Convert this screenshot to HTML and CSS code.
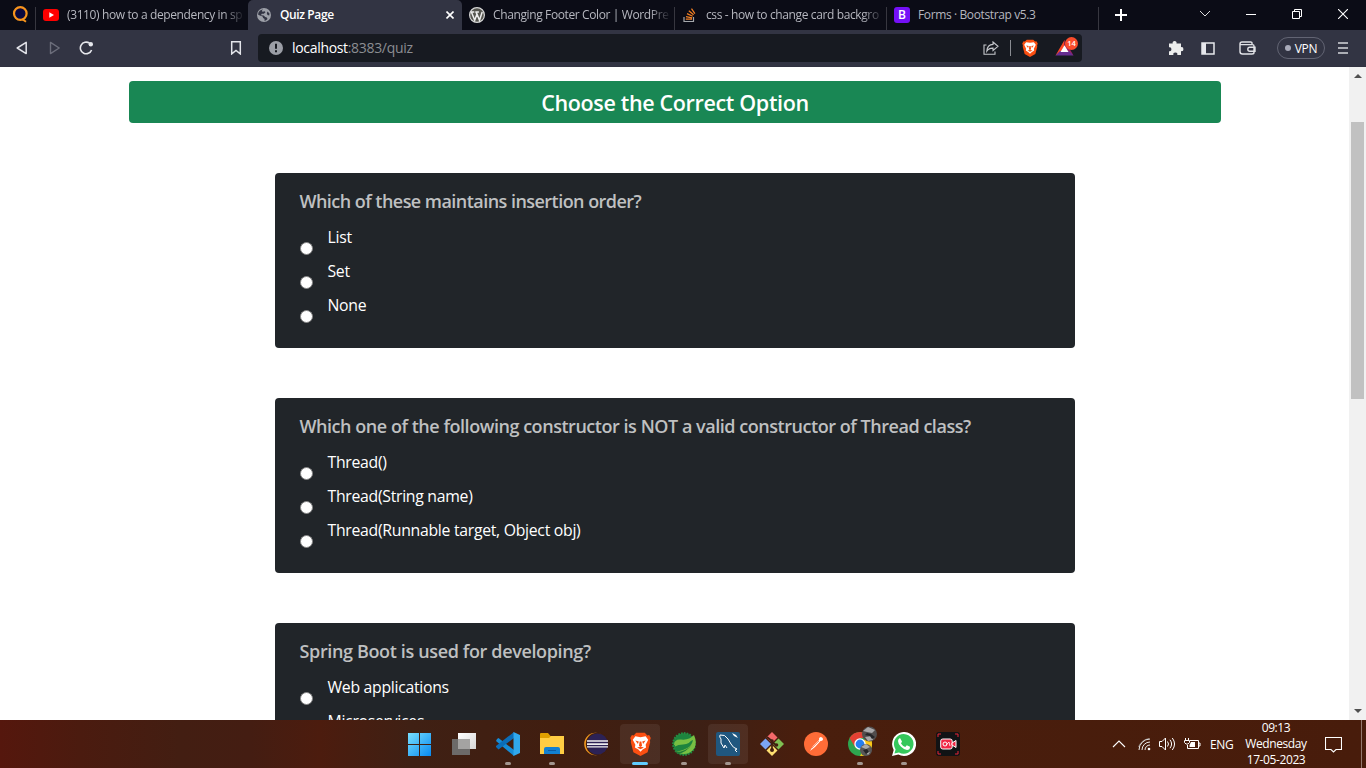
FILE: index.html
```html
<!DOCTYPE html>
<html lang="en">
<head>
<meta charset="utf-8">
<title>Quiz Page</title>
<link rel="stylesheet" href="styles.css">
</head>
<body>
<div class="screen">
  <header class="tabs">
    <div class="tab pinned">
      <svg width="18" height="18" viewBox="0 0 18 18"><circle cx="8.3" cy="7.5" r="6.3" fill="#08083f" stroke="#f7941d" stroke-width="2.2"/><path d="M10 13l4 2.8" stroke="#f7941d" stroke-width="2"/></svg>
    </div>
    <div class="tab tab-youtube">
      <svg width="16" height="12" viewBox="0 0 16 12"><rect width="16" height="12" rx="3" fill="#f00"/><path d="M6.3 3.3v5.4L11 6z" fill="#fff"/></svg>
      <span class="tab-title t-youtube">(3110) how to a dependency in sp</span>
    </div>
    <div class="tab active">
      <svg width="14" height="14" viewBox="0 0 14 14"><circle cx="7" cy="7" r="7" fill="#9da0a8"/><path d="M6 1.300L4.700 3l1 .7 2-.5.8 1-1.700 1.600H4.700L4 7.300l2.700.2 1.500 1.600 1.600.3.700 1.500-1.700 1.700-1.400.2.200-1.900-1.500-.8-.5-1.700L2.300 7.300 1 6.500A6 6 0 0 1 3 2.500zM10.500 3.500l2 2-.3 2-1.700-.6-.7-1.600z" fill="#323443"/></svg>
      <span class="tab-title t-quiz">Quiz Page</span>
      <svg class="tab-close" width="8" height="8" viewBox="0 0 8 8"><path d="M.5.5l7 7m0-7l-7 7" stroke="#fff" stroke-width="1.6"/></svg>
    </div>
    <div class="tab tab-wp">
      <svg width="16" height="16" viewBox="0 0 16 16"><circle cx="8" cy="8" r="7.4" fill="#55554f" stroke="#d5d5d5" stroke-width="1.2"/><path d="M2.4 5l3.3 8.2L8 7l2.5 6.2L13.2 5M1.8 5h3.5M6.3 5h3.6M7 5l1 2.5" fill="none" stroke="#eee" stroke-width="1.5"/></svg>
      <span class="tab-title t-wp">Changing Footer Color | WordPre</span>
    </div>
    <div class="tab tab-so">
      <svg width="14" height="16" viewBox="0 0 14 16"><path d="M1 10v4.5h9.5V10" fill="none" stroke="#a4a7ab" stroke-width="1.2"/><path d="M2.8 12.2H9M3 9.6l6.1 1.2M4 6.6l5.7 2.6M5.8 3.8l4.8 3.9M8.5 1.6l3.4 5" stroke="#f48024" stroke-width="1.2"/></svg>
      <span class="tab-title t-so">css - how to change card backgro</span>
    </div>
    <div class="tab tab-bs">
      <span class="bs-logo">B</span>
      <span class="tab-title t-bs">Forms · Bootstrap v5.3</span>
    </div>
    <svg class="plus" width="12" height="12" viewBox="0 0 12 12"><path d="M6 0v12M0 6h12" stroke="#fff" stroke-width="2"/></svg>
    <div class="window-buttons">
      <span><svg width="12" height="8" viewBox="0 0 12 8"><path d="M1 1l5 5 5-5" fill="none" stroke="#ddd"/></svg></span>
      <span><svg width="10" height="10" viewBox="0 0 10 10"><path d="M0 5.5h10" stroke="#fff"/></svg></span>
      <span><svg width="10" height="10" viewBox="0 0 10 10"><path d="M.5 2.5h7v7h-7zM2.5 2.5v-2h7v7h-2" fill="none" stroke="#fff"/></svg></span>
      <span><svg width="10" height="10" viewBox="0 0 10 10"><path d="M0 0l10 10M10 0L0 10" stroke="#fff" stroke-width="1.1"/></svg></span>
    </div>
  </header>

  <nav class="toolbar">
    <svg class="back" width="12" height="14" viewBox="0 0 12 14"><path d="M10.2 1.4v11.2L1.2 7z" fill="none" stroke="#e3e4ea" stroke-width="1.5" stroke-linejoin="round"/></svg>
    <svg class="forward" width="12" height="14" viewBox="0 0 12 14"><path d="M1.5 1.4v11.2L10.2 7z" fill="none" stroke="#6c6e7b" stroke-width="1.4" stroke-linejoin="round"/></svg>
    <svg class="reload" width="15" height="14" viewBox="0 0 15 14"><path d="M10.500 2.200A5.800 5.800 0 1 0 12.600 9" fill="none" stroke="#e6e7ec" stroke-width="1.6"/><circle cx="11.800" cy="3.300" r="2.200" fill="#e6e7ec"/></svg>
    <svg class="bookmark" width="12" height="14" viewBox="0 0 12 14"><path d="M1.7.8h8.6v12.1L6 9.5l-4.3 3.4z" fill="none" stroke="#e3e4ea" stroke-width="1.5"/></svg>
    <div class="address">
      <svg width="14" height="14" viewBox="0 0 14 14"><circle cx="7" cy="7" r="7" fill="#9b9ea6"/><path d="M7 2.8v5M7 9.2v2" stroke="#171a21" stroke-width="2"/></svg>
      <span class="url"><b>localhost</b>:8383/quiz</span>
      <svg class="share" width="16" height="14" viewBox="0 0 16 14"><path d="M3.5 4H1v9.2h11V10.5" fill="none" stroke="#c5c7cc" stroke-width="1.1"/><path d="M10 1l5 4.3-5 4.2V7.1C7 7 5.200 8 3.800 10.200 4 6.500 6 3.600 10 3.400z" fill="none" stroke="#c5c7cc" stroke-width="1.100"/></svg>
      <i class="rule"></i>
      <svg class="shield" width="16" height="18" viewBox="0 0 24 28"><use href="#lion"/></svg>
      <span class="rewards">
        <svg width="19" height="16" viewBox="0 0 19 16"><path d="M9.500 0L.5 15.500 9.500 10z" fill="#ff4724"/><path d="M9.500 0l9 15.500L9.500 10z" fill="#9e1f63"/><path d="M.5 15.500h18L14 11H5z" fill="#662d91"/><path d="M9.500 5.300l4 6.700h-8z" fill="#fff"/></svg>
        <em>14</em>
      </span>
    </div>
    <svg class="puzzle" width="16" height="16" viewBox="0 0 16 16"><path d="M1 3.500h3.700a2 2 0 1 1 3.800 0H13v3.700a2 2 0 1 1 0 3.900V15H9.300a2 2 0 1 0-3.900 0H1v-3.800a2 2 0 1 0 0-3.900z" fill="#eceded"/></svg>
    <svg class="sidebar" width="14" height="13" viewBox="0 0 14 13"><path d="M1 1h12v11H1z" fill="none" stroke="#e6e7ec" stroke-width="1.500"/><path d="M1 1h4v11H1z" fill="#e6e7ec"/></svg>
    <svg class="wallet" width="17" height="14" viewBox="0 0 17 14"><path d="M13 3.500V2q0-1-1.200-1H3Q1 1 1 3v7.500Q1 13 3.500 13H13q2 0 2-1.500V5q0-1.400-1.500-1.400H3Q1 3.600 1 2.500M16 6.300h-5.200a2 2 0 0 0 0 4H16z" fill="none" stroke="#e1e2e7" stroke-width="1.400"/></svg>
    <span class="vpn"><i></i><span>VPN</span></span>
    <svg class="menu" width="10" height="12" viewBox="0 0 10 12"><path d="M0 1h10M0 6h10M0 11h10" stroke="#d5d6db" stroke-width="1.600"/></svg>
  </nav>

  <div class="viewport">
    <main class="page">
      <h1><span>Choose the Correct Option</span></h1>
      <section class="card">
        <h2 class="q1">Which of these maintains insertion order?</h2>
        <label><input type="radio" name="a"><span>List</span></label>
        <label><input type="radio" name="a"><span>Set</span></label>
        <label><input type="radio" name="a"><span>None</span></label>
      </section>
      <section class="card">
        <h2 class="q2">Which one of the following constructor is NOT a valid constructor of Thread class?</h2>
        <label><input type="radio" name="b"><span>Thread()</span></label>
        <label><input type="radio" name="b"><span>Thread(String name)</span></label>
        <label><input type="radio" name="b"><span>Thread(Runnable target, Object obj)</span></label>
      </section>
      <section class="card">
        <h2 class="q3">Spring Boot is used for developing?</h2>
        <label><input type="radio" name="c"><span>Web applications</span></label>
        <label><input type="radio" name="c"><span>Microservices</span></label>
      </section>
    </main>
    <aside class="scrollbar">
      <svg width="8" height="4" viewBox="0 0 8 4"><path d="M0 4l4-4 4 4z" fill="#505050"/></svg>
      <div class="thumb"></div>
      <svg class="down" width="8" height="4" viewBox="0 0 8 4"><path d="M0 0l4 4 4-4z" fill="#505050"/></svg>
    </aside>
  </div>

  <footer class="taskbar">
    <div class="apps">
      <span class="app"><svg width="24" height="24" viewBox="0 0 24 24"><defs><linearGradient id="win" gradientUnits="userSpaceOnUse" x1="0" y1="0" x2="24" y2="24"><stop stop-color="#7be1ff"/><stop offset="1" stop-color="#0588f0"/></linearGradient></defs><path d="M0 1h11v11H0zM12 1h11v11H12zM0 13h11v11H0zM12 13h11v11H12z" fill="url(#win)"/></svg></span>
      <span class="app"><svg width="24" height="24" viewBox="0 0 24 24"><defs><linearGradient id="tv" x2="1" y2="1"><stop stop-color="#fff"/><stop offset="1" stop-color="#d6d6d6"/></linearGradient></defs><path d="M6 1h18v16H6z" fill="url(#tv)"/><path d="M0 7h18v16H0z" fill="#6c6a69"/><path d="M6 7h12v10H6z" fill="#a4a3a2"/></svg></span>
      <span class="app run"><svg width="24" height="24" viewBox="0 0 24 24"><path d="M1 7l1.500-1L18 18v6L0 9z" fill="#168cd7"/><path d="M0 15l2.500 2.500L18 6V0L0 14z" fill="#0b6db8"/><path d="M17.500 0L24 3v18l-6.500 3z" fill="#30a8ed"/></svg></span>
      <span class="app run"><svg width="24" height="24" viewBox="0 0 24 24"><path d="M0 2q0-1 1-1h7l2.500 3H23q1 0 1 1v8H0z" fill="#dfa000"/><path d="M0 6h9l2-2h13v18H0z" fill="#ffcd43"/><path d="M4 22v-5q0-2 2-2h12q2 0 2 2v5z" fill="#1280d1"/><path d="M8 18h8v1H8z" fill="#0b5ba3"/></svg></span>
      <span class="app"><svg width="24" height="24" viewBox="0 0 24 24"><circle cx="11.500" cy="12" r="11.300" fill="#f49b20"/><circle cx="13" cy="12" r="11.200" fill="#411e10"/><circle cx="13.500" cy="12" r="10.500" fill="#2c2255"/><path d="M3 8.300h21v1.500H3zM3 11.300h21v1.700H3zM3 14.300h21v1.300H3z" fill="#eee"/></svg></span>
      <span class="app run focus"><svg width="21" height="24" viewBox="0 0 24 28"><g id="lion"><path d="M7 1h10l3 3 2-.5L24 7l-1 3 .3 2-3 11.500L12 28l-8.300-4.500-3-11.500L1 10 0 7l2-3.500L4 4z" fill="#fb4f12"/><path d="M6 5l6 1 6-1 3 4-3 6 .5 3-4 2.500L12 23l-2.500-2.500-4-2.500.5-3-3-6z" fill="#fff"/><path d="M6 10l4 1-1 3zM18 10l-4 1 1 3zM11 11h2l.8 5-1.800 1.200-1.800-1.200zM8 18l4-1 4 1-4 2z" fill="#fb4f12"/></g></svg></span>
      <span class="app run"><svg width="24" height="24" viewBox="0 0 24 24"><circle cx="12" cy="12" r="10.800" fill="#1d843e" stroke="#238c42" stroke-width="2.200" stroke-dasharray="1.700 1.100"/><path d="M2 13Q2 7 9 7.500 17 8.500 22 3 26 12 21 18 14 25 4 20l7-2Q20 15 21 8 13 12 2 13z" fill="#78c043"/><path d="M3 13q1-4 7-3.500 6 .5 10-2.500-2 5-9 5.500-5 0-8 2z" fill="#78c043"/><path d="M4 20q10 0 16-8-5 8-14 10z" fill="#207c38"/></svg></span>
      <span class="app run hover"><svg width="24" height="24" viewBox="0 0 24 24"><rect width="24" height="24" rx="2" fill="#20577f"/><path d="M4 3q5-1 8 4l3 5q2 4 6 5l-2 1 2 2M4 3q-1 2 1 4v4l3 5 1-3 2 3" fill="none" stroke="#fff" stroke-width="1"/><path d="M16 1l2 3 4 2-2-3z" fill="#fff"/></svg></span>
      <span class="app"><svg width="24" height="24" viewBox="0 0 24 24"><path d="M12 0l5.500 5.500L12 11 6.500 5.500z" fill="#f3696a"/><path d="M5.500 6.500L11 12l-5.500 5.500L0 12z" fill="#7ba5f4"/><path d="M18.500 6.500L24 12l-5.500 5.500L13 12z" fill="#7fc052"/><path d="M12 13l5.500 5.500L12 24l-5.500-5.500z" fill="#ffdf70"/><path d="M7 5l5 4v10M12 10l4 3" fill="none" stroke="#411e10" stroke-width="1.700"/><circle cx="12" cy="9" r="1.800" fill="#411e10"/><circle cx="16.500" cy="13" r="1.800" fill="#411e10"/><circle cx="12" cy="18" r="2" fill="#411e10"/></svg></span>
      <span class="app"><svg width="24" height="24" viewBox="0 0 24 24"><circle cx="12" cy="12" r="12" fill="#ff6c37"/><path d="M6 19l3-5 6-6q-.5-2.500 1.500-3 2.500 0 2.500 2.500-.5 1.500-2.500 1.500L11 15z" fill="#fff"/><path d="M8 16l7-7" stroke="#ff6c37" stroke-width=".7"/></svg></span>
      <span class="app run"><svg class="chrome" width="30" height="30" viewBox="0 0 30 30"><circle cx="12" cy="18" r="12" fill="#2ea64f"/><path d="M1.600 12A12 12 0 0 1 22.400 12H12z" fill="#e34133"/><path d="M22.400 12A12 12 0 0 1 12 30l5-9-1-9z" fill="#fdc718"/><path d="M1.600 12L7 21l5-9z" fill="#e34133"/><circle cx="12" cy="18" r="5.700" fill="#fff"/><circle cx="12" cy="18" r="4.400" fill="#267ff0"/><circle cx="21.500" cy="8" r="7.500" fill="#514d4d"/><path d="M15 5l5-4 7 3-3 3-5-1zM17 11l7-1 1 4-5 1z" fill="#a9a8aa"/><path d="M19 7l4 1 4 3-3 2-2-3-5-1z" fill="#252528"/><circle cx="18" cy="24" r="6" fill="#595758"/><path d="M13 21l5-3 4 3-4 2zM17 25l5 1-2 3z" fill="#aaa"/><path d="M15 24l4-1 2 3-3 2z" fill="#252528"/></svg></span>
      <span class="app run"><svg width="24" height="24" viewBox="0 0 24 24"><path d="M0 24l1.700-6A12 12 0 1 1 6.300 22.500z" fill="#fff"/><path d="M2.400 21.600l1.200-4.200A9.800 9.800 0 1 1 7 20.500z" fill="#35c85b"/><path d="M8 6l2 3.500-1 2q1.500 2.500 4.300 3.500l1.500-1.700 3.200 1.500Q18 18 15 18q-3-.3-6-3.200T6 9q0-2 2-3z" fill="#fff"/></svg></span>
      <span class="app"><svg width="24" height="24" viewBox="0 0 24 24"><rect width="24" height="24" rx="3" fill="#111315"/><path d="M2 5V2h3M19 2h3v3M22 19v3h-3M5 22H2v-3" fill="none" stroke="#e72438"/><rect x="4.700" y="7" width="11.500" height="10" rx="2" fill="#f02846" stroke="#fff"/><path d="M16 11l4-2.500v7L16 13z" fill="#f02846" stroke="#fff"/><circle cx="9" cy="12" r="2" fill="none" stroke="#fff"/><path d="M10 13l3-3 1 4" fill="none" stroke="#fff" stroke-width=".8"/></svg></span>
    </div>
    <div class="tray">
      <svg class="up" width="14" height="8" viewBox="0 0 14 8"><path d="M1 7l6-6 6 6" fill="none" stroke="#fff" stroke-width="1.100"/></svg>
      <svg class="wifi" width="13" height="13" viewBox="0 0 13 13"><path d="M1 12A11 11 0 0 1 12 1M4 12A8 8 0 0 1 12 4M7 12A5 5 0 0 1 12 7" fill="none" stroke="#eee"/><path d="M.5 9Q3 2 11 .5" fill="none" stroke="#bbb" stroke-width=".6"/><circle cx="11" cy="11" r="1.300" fill="#fff"/></svg>
      <svg class="sound" width="17" height="14" viewBox="0 0 17 14"><path d="M.5 4.500H3L6.500 1v12L3 9.500H.5zM8.500 4.500q2 2.500 0 5M11 2.800q3.200 4.200 0 8.400M13.300 1q4.500 6 0 12" fill="none" stroke="#fff"/></svg>
      <svg class="battery" width="17" height="12" viewBox="0 0 17 12"><path d="M6 2.500h8.500v8H3.500V7M14.500 5H16v3h-1.500M1.500 0v2.500M4.500 0v2.500M.5 2.500h5v2L4 6H2L.5 4.500z" fill="none" stroke="#fff"/><path d="M7 4h4v5H5.500V7z" fill="#fff"/></svg>
      <span class="lang">ENG</span>
      <div class="clock"><span class="time">09:13</span><span class="day">Wednesday</span><span class="date">17-05-2023</span></div>
      <svg class="notice" width="17" height="17" viewBox="0 0 17 17"><path d="M.5 1.500h16v12H11L8.500 16 6 13.500H.5z" fill="none" stroke="#fff" stroke-width="1.100"/></svg>
      <i class="desktop"></i>
    </div>
  </footer>
</div>
</body>
</html>
```
FILE: styles.css
```css
* { box-sizing: border-box; }
body { margin: 0; font-family: "Open Sans", "Noto Sans", sans-serif; }
svg { display: block; flex: none; }
.screen { width: 1366px; height: 768px; display: flex; flex-direction: column; overflow: hidden; }

.tabs { flex: none; height: 30px; display: flex; background: #0b0c16; }
.tab { flex: none; display: flex; align-items: center; height: 30px; padding-left: 7px; white-space: nowrap; font-size: 12px; letter-spacing: -.38px; color: #b6b7bf; }
.pinned { width: 36px; padding-left: 12px; }
.pinned::after, .tab-wp::after, .tab-so::after, .tab-bs::after { content: ""; flex: none; width: 1px; height: 23px; align-self: flex-end; margin-left: auto; background: #373740; }
.tab-youtube { width: 212px; }
.active { width: 214px; padding-left: 9px; background: #323443; border-radius: 5px 5px 0 0; color: #fff; font-weight: 600; }
.tab-close { margin-left: auto; margin-right: 8px; }
.tab-wp { width: 213px; }
.tab-so { width: 212px; padding-left: 8px; }
.tab-bs { width: 212px; }
.tab-title { margin-left: 8px; line-height: 18px; }
.t-youtube, .t-wp, .t-so { flex: none; width: 178px; -webkit-mask-image: linear-gradient(90deg, #000 88%, transparent); mask-image: linear-gradient(90deg, #000 88%, transparent); }
.t-so { margin-left: 9px; }
.t-quiz { margin-left: 9px; }
.bs-logo { flex: none; width: 16px; height: 16px; border-radius: 3px; background: #7510f7; color: #fff; font-size: 12px; font-weight: 600; line-height: 16px; text-align: center; letter-spacing: 0; }
.plus { margin: 9px 0 0 16px; }
.window-buttons { display: flex; margin-left: auto; }
.window-buttons span { width: 46px; height: 28px; display: flex; align-items: center; justify-content: center; }

.toolbar { flex: none; height: 37px; display: flex; align-items: center; background: #323443; border-bottom: 1px solid #303140; padding-left: 16px; }
.forward { margin-left: 21px; }
.reload { margin-left: 18px; }
.bookmark { margin-left: 136px; }
.address { width: 824px; height: 28px; margin-left: 16px; margin-top: -1px; padding-left: 11px; border-radius: 4px; background: #171a21; display: flex; align-items: center; }
.url { margin-left: 9px; font-size: 14px; letter-spacing: -.32px; color: #8b8d92; }
.url b { font-weight: 400; color: #fff; }
.share { margin-left: auto; }
.rule { width: 1px; height: 16px; margin-left: 11px; background: #8a8c92; }
.shield { margin-left: 11px; }
.rewards { position: relative; margin-left: 17px; margin-right: 7px; width: 20px; }
.rewards em { position: absolute; left: 10px; top: -3px; width: 13px; height: 13px; border-radius: 50%; background: #fa4c2b; color: #fff; font: 600 7.500px/13px "Open Sans", sans-serif; text-align: center; }
.puzzle { margin-left: 86px; }
.sidebar { margin-left: 17px; }
.wallet { margin-left: 24px; }
.vpn { width: 48px; height: 22px; margin-left: 21px; border: 1px solid #626473; border-radius: 11px; display: flex; align-items: center; justify-content: center; gap: 4px; color: #fff; font-size: 12px; letter-spacing: -.3px; }
.vpn i { width: 6px; height: 6px; border-radius: 50%; background: #a9abba; }
.menu { margin-left: 13px; }

.viewport { height: 653px; display: flex; background: #fff; overflow: hidden; }
.page { width: 1349px; padding: 14px 128px 0 129px; overflow: hidden; }
h1 { margin: 0; height: 42px; border-radius: 4px; background: #198754; color: #fff; font-size: 21.500px; font-weight: 600; letter-spacing: -.34px; line-height: 44px; text-align: center; white-space: nowrap; }
.card { width: 800px; height: 175px; margin: 50px auto 0; padding: 16px 24px; border-radius: 4px; background: #212529; color: #fff; }
h2 { margin: 0 0 10px .5px; font-size: 18px; font-weight: 600; line-height: 25px; color: #bfc0c1; white-space: nowrap; }
.q1 { letter-spacing: -.54px; }
.q2 { letter-spacing: -.46px; }
.q3 { letter-spacing: -.36px; }
.card label { display: flex; align-items: flex-start; height: 34px; font-size: 15.800px; letter-spacing: -.29px; line-height: 26px; white-space: nowrap; }
.card input { appearance: none; flex: none; width: 13px; height: 13px; margin: 18px 14.500px 0 1px; border: 1px solid #858585; border-radius: 50%; background: #fff; }
.scrollbar { width: 17px; height: 653px; background: #f1f1f1; display: flex; flex-direction: column; align-items: center; padding: 7px 0; }
.thumb { width: 13px; height: 277px; margin-top: 44px; background: #c1c1c1; }
.down { margin-top: auto; }

.taskbar { flex: none; height: 48px; padding-left: 400px; display: flex; background: linear-gradient(90deg, #55170d 0, #4b1b0f 80px, #431e12 180px, #441d12 250px, #4c1c0e 320px, #3f2014 410px, #411e10 560px, #3d2015 700px, #491e0d 800px, #481c0b 1366px); }
.apps { display: flex; gap: 4px; padding-top: 4px; }
.app { width: 40px; height: 40px; display: flex; align-items: center; justify-content: center; position: relative; border-radius: 4px; }
.run::after { content: ""; position: absolute; left: 17px; bottom: -1px; width: 6px; height: 3px; border-radius: 2px; background: #a3968f; }
.focus, .hover { background: rgba(255,255,255,.07); }
.run.focus::after { left: 12px; width: 16px; background: #60cdff; }
.chrome { margin: -6px -6px 0 0; }
.tray { margin-left: auto; display: flex; align-items: center; color: #fff; font-size: 12px; letter-spacing: -.4px; }
.wifi { margin-left: 12px; }
.sound { margin-left: 8px; }
.battery { margin-left: 8px; }
.lang { width: 23px; margin-left: 9px; }
.clock { width: 62px; margin-left: 12px; display: flex; flex-direction: column; align-items: center; line-height: 16px; }
.notice { margin-left: 18px; }
.desktop { width: 1px; height: 48px; margin-left: 19px; margin-right: 4px; background: #94786e; }
.up { margin-right: 0; }
```
